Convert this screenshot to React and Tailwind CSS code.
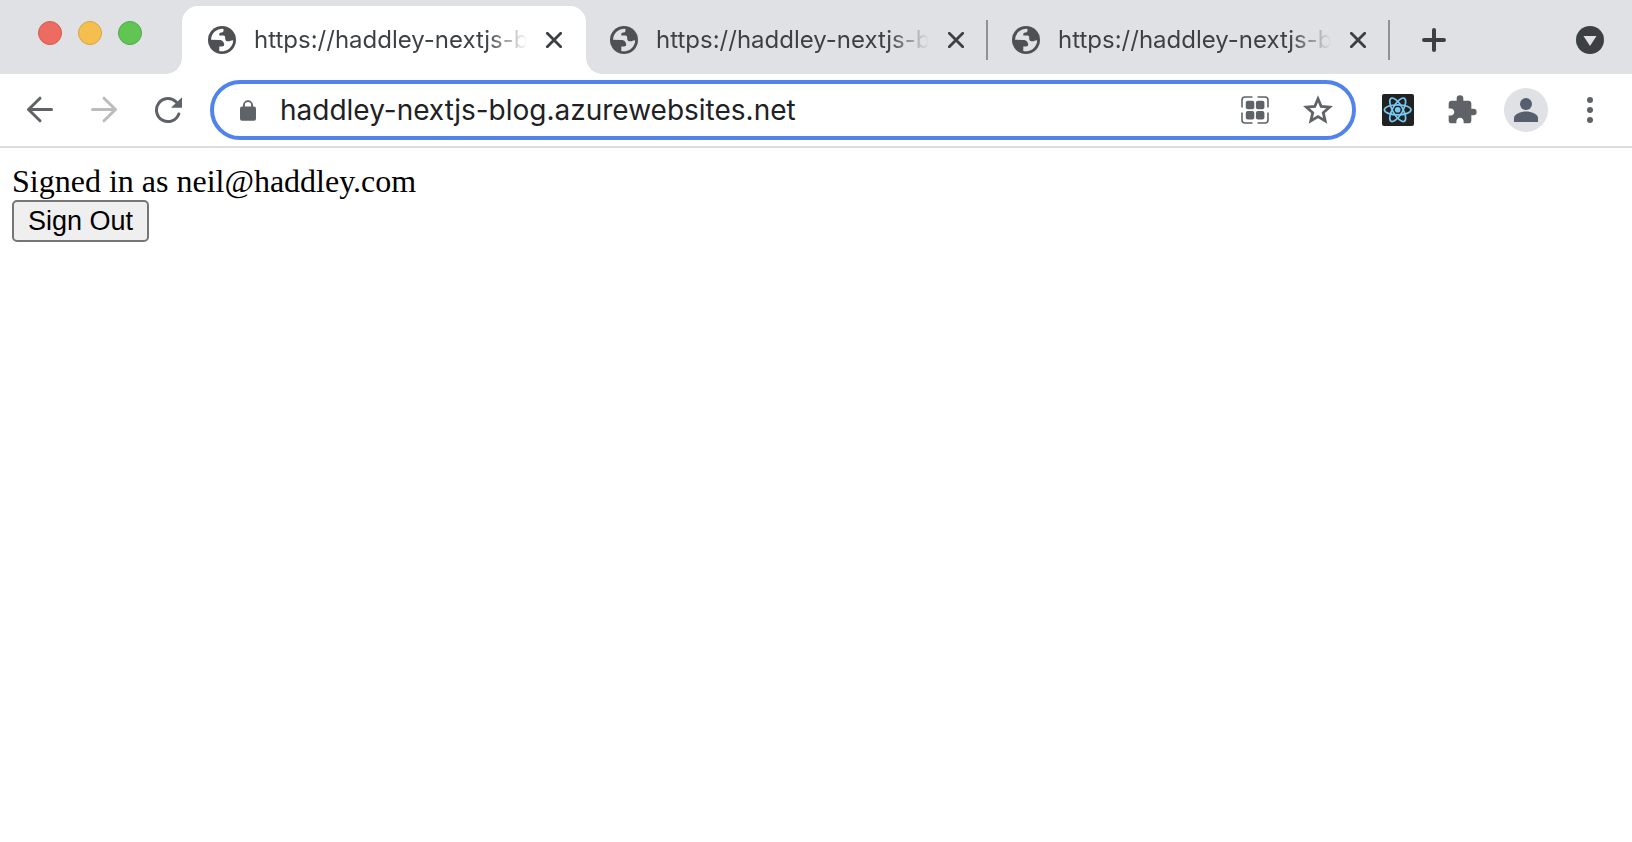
import React from "react";

function Globe() {
  return (
    <svg className="size-7 shrink-0" viewBox="0 0 28 28" aria-hidden="true">
      <circle cx="14" cy="14" r="14" fill="#4f5054" />
      <path
        className="fill-[var(--tab-bg)]"
        d="M3 13.800 A11.200 11.200 0 0 1 15.500 2.900 V4.500 C15.500 5.900 14.600 6.500 13.200 6.500 C12 6.500 11.300 7.200 11.300 8.300 V9.600 H15.300 C16.600 9.600 17.200 10.400 17.200 11.600 V12.700 C17.200 14.400 18.300 15.300 20 15.300 H21 C22 15.300 22.600 14.200 25.200 14.200 A11.200 11.200 0 0 1 11.300 24.900 V20.600 H14 C15.500 20.600 16.200 19.800 16.200 18.600 C16.200 16.200 14.500 13.900 11.500 13.900 Z"
      />
    </svg>
  );
}

function CloseIcon() {
  return (
    <svg className="size-4" viewBox="0 0 16 16" fill="none" stroke="#3c4043" strokeWidth="2.8" strokeLinecap="round" aria-hidden="true">
      <path d="M1.300 1.300 14.700 14.700M14.700 1.300 1.300 14.700" />
    </svg>
  );
}

function Tab({ active }) {
  return (
    <div
      role="tab"
      aria-selected={active}
      className={
        active
          ? "relative flex h-[68px] w-[404px] items-center rounded-t-2xl bg-white pl-[26px] pr-6 [--tab-bg:#ffffff]"
          : "relative flex h-[68px] w-[402px] items-center pl-6 pr-6 [--tab-bg:#dfe1e5]"
      }
    >
      {active && (
        <>
          <span className="absolute bottom-0 right-full size-4 bg-[radial-gradient(circle_at_0_0,transparent_15.5px,white_16px)]" />
          <span className="absolute bottom-0 left-full size-4 bg-[radial-gradient(circle_at_100%_0,transparent_15.5px,white_16px)]" />
        </>
      )}
      <Globe />
      <span className="ml-[18px] w-[273px] overflow-hidden whitespace-nowrap bg-linear-to-r from-[#3c4043] from-85% to-transparent bg-clip-text text-2xl text-transparent">
        https://haddley-nextjs-b
      </span>
      <button type="button" aria-label="Close tab" className="ml-auto">
        <CloseIcon />
      </button>
      {!active && <span className="absolute right-0 h-10 w-0.5 bg-[#8f9195]" />}
    </div>
  );
}

function ReactLogo() {
  return (
    <svg className="size-8" viewBox="0 0 32 32" aria-hidden="true">
      <rect width="32" height="32" rx="2" fill="#222" />
      <g fill="none" stroke="#77c9f2" strokeWidth="1.7" transform="translate(15.700 15.800)">
        <ellipse rx="13.300" ry="5" />
        <ellipse rx="13.300" ry="5" transform="rotate(60)" />
        <ellipse rx="13.300" ry="5" transform="rotate(120)" />
      </g>
      <circle cx="15.700" cy="15.800" r="2.800" fill="#77c9f2" />
    </svg>
  );
}

export default function App() {
  return (
    <div className="min-h-screen bg-white font-['Inter',sans-serif]">
      <header>
        <div className="flex h-[74px] items-end bg-[#dfe1e5]">
          <div className="flex w-[182px] shrink-0 gap-4 self-start pl-[38px] pt-[21px]">
            <button type="button" aria-label="Close window" className="size-6 rounded-full border border-[#d65a50] bg-[#ed6b60]" />
            <button type="button" aria-label="Minimize window" className="size-6 rounded-full border border-[#d8a445] bg-[#f5bf4f]" />
            <button type="button" aria-label="Zoom window" className="size-6 rounded-full border border-[#52a943] bg-[#61c554]" />
          </div>
          <div role="tablist" className="flex">
            <Tab active />
            <Tab active={false} />
            <Tab active={false} />
          </div>
          <div className="flex h-[68px] grow items-center justify-between pl-8 pr-7">
            <button type="button" aria-label="New tab">
              <svg className="size-6" viewBox="0 0 24 24" fill="none" stroke="#3c4043" strokeWidth="4" strokeLinecap="round" aria-hidden="true">
                <path d="M12 2v20M2 12h20" />
              </svg>
            </button>
            <button type="button" aria-label="Search tabs">
              <svg className="size-7" viewBox="0 0 28 28" aria-hidden="true">
                <circle cx="14" cy="14" r="14" fill="#3c4043" />
                <path d="M7.500 10h13L14 20z" fill="#dfe1e5" />
              </svg>
            </button>
          </div>
        </div>
        <div className="flex h-[74px] items-center border-b-2 border-[#dadcde] pl-[26px] pr-[35px]">
          <button type="button" aria-label="Back">
            <svg className="size-7" viewBox="0 0 28 28" fill="none" stroke="#5f6368" strokeWidth="3" strokeLinecap="round" strokeLinejoin="round" aria-hidden="true">
              <path d="M25.500 13.500H2.500M14 2.200l-11.500 11.300L14 24.800" />
            </svg>
          </button>
          <button type="button" aria-label="Forward" className="ml-9">
            <svg className="size-7" viewBox="0 0 28 28" fill="none" stroke="#babcbe" strokeWidth="3" strokeLinecap="round" strokeLinejoin="round" aria-hidden="true">
              <path d="M2.500 13.500h23M14 2.200l11.500 11.300L14 24.800" />
            </svg>
          </button>
          <button type="button" aria-label="Reload" className="ml-9">
            <svg className="size-7" viewBox="0 0 28 28" aria-hidden="true">
              <path d="M22.100 5.900A11.500 11.500 0 1 0 24.800 18" fill="none" stroke="#5f6368" strokeWidth="3" strokeLinecap="round" />
              <path d="M28 1.200v10.600H17z" fill="#5f6368" />
            </svg>
          </button>
          <div className="ml-7 flex h-[60px] grow items-center rounded-full border-4 border-[#5083ec] pl-[26px] pr-[19px]">
            <svg className="h-[22px] w-4 shrink-0" viewBox="0 0 16 22" aria-hidden="true">
              <rect y="7.500" width="16" height="14.200" rx="2" fill="#5f6368" />
              <path d="M3.900 8.500V6.200a4.100 4.100 0 0 1 8.200 0V8.500" fill="none" stroke="#5f6368" strokeWidth="1.900" />
            </svg>
            <input
              type="text"
              aria-label="Address"
              defaultValue="haddley-nextjs-blog.azurewebsites.net"
              className="ml-6 min-w-0 grow text-[28px] text-[#202124] outline-none"
            />
            <button type="button" aria-label="Install app">
              <svg className="size-7" viewBox="0 0 28 28" aria-hidden="true">
                <path d="M11.500 1H4a3 3 0 0 0-3 3v7.500M16.500 1H24a3 3 0 0 1 3 3v7.500M11.500 27H4a3 3 0 0 1-3-3v-7.500M16.500 27H24a3 3 0 0 0 3-3v-7.500" fill="none" stroke="#5f6368" strokeWidth="1.600" />
                <g fill="#5f6368">
                  <rect x="4.800" y="4.800" width="8.500" height="8.500" rx="2" />
                  <rect x="14.900" y="4.800" width="8.500" height="8.500" rx="2" />
                  <rect x="4.800" y="14.900" width="8.500" height="8.500" rx="2" />
                  <rect x="14.900" y="14.900" width="8.500" height="8.500" rx="2" />
                </g>
              </svg>
            </button>
            <button type="button" aria-label="Bookmark this page" className="ml-[34px]">
              <svg className="size-[30px]" viewBox="0 0 28 28" fill="none" stroke="#5f6368" strokeWidth="2.600" aria-hidden="true">
                <path d="M14 3.500l3 7.200 7.800.7-5.900 5.100 1.800 7.700-6.700-4.100-6.700 4.100 1.800-7.700-5.900-5.100 7.800-.7z" />
              </svg>
            </button>
          </div>
          <div className="ml-[26px] flex items-center">
            <button type="button" aria-label="React Developer Tools">
              <ReactLogo />
            </button>
            <button type="button" aria-label="Extensions" className="ml-8">
              <svg className="size-8" viewBox="0 0 24 24" fill="#5f6368" aria-hidden="true">
                <path d="M20.500 11H19V7c0-1.100-.9-2-2-2h-4V3.500a2.500 2.500 0 0 0-5 0V5H4c-1.100 0-1.990.9-1.990 2v3.800H3.500c1.490 0 2.700 1.210 2.700 2.700s-1.210 2.700-2.700 2.700H2V20c0 1.100.9 2 2 2h3.800v-1.500c0-1.490 1.210-2.700 2.700-2.700s2.700 1.210 2.700 2.700V22H17c1.100 0 2-.9 2-2v-4h1.500a2.500 2.500 0 0 0 0-5z" />
              </svg>
            </button>
            <button type="button" aria-label="Profile" className="ml-[26px] flex size-11 items-center justify-center rounded-full bg-[#dfe1e5]">
              <svg className="size-6" viewBox="0 0 24 24" fill="#575f6e" aria-hidden="true">
                <circle cx="12" cy="6" r="6" />
                <path d="M0 24v-4c0-4 7-6.500 12-6.500s12 2.500 12 6.500v4z" />
              </svg>
            </button>
            <button type="button" aria-label="Menu" className="ml-[35px]">
              <svg className="h-[26px] w-[14px]" viewBox="0 0 14 26" fill="#5f6368" aria-hidden="true">
                <circle cx="7" cy="3" r="3" />
                <circle cx="7" cy="13" r="3" />
                <circle cx="7" cy="23" r="3" />
              </svg>
            </button>
          </div>
        </div>
      </header>
      <main className="p-3 pt-4 font-['Liberation_Serif',serif] text-[32px] leading-[34px] text-black">
        <p className="mb-0.5">Signed in as neil@haddley.com</p>
        <button type="button" className="block rounded-[5px] border-2 border-[#767676] bg-[#efefef] px-3.5 font-['Liberation_Sans',sans-serif] text-[27px] leading-[38px]">
          Sign Out
        </button>
      </main>
    </div>
  );
}
